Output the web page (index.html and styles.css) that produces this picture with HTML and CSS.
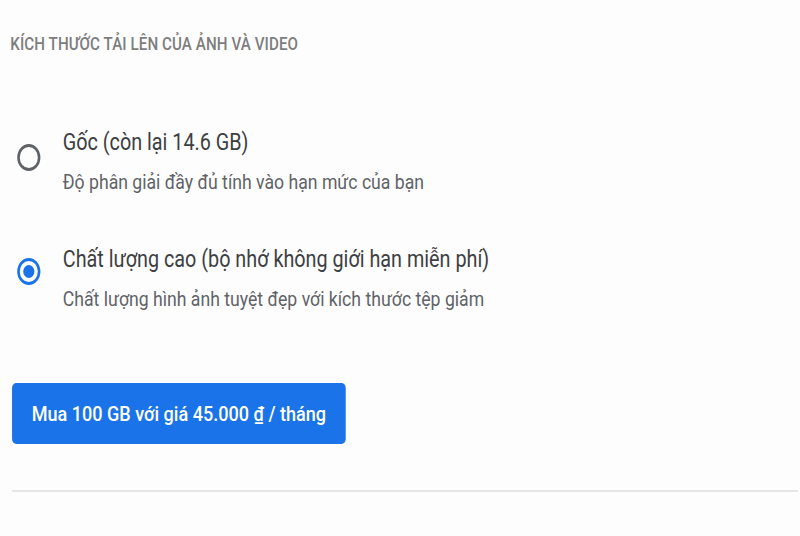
FILE: index.html
```html
<!DOCTYPE html>
<html lang="vi">
<head>
    <meta charset="UTF-8">
    <title>Cài đặt - Kích thước tải lên</title>
    <meta name="viewport" content="width=device-width, initial-scale=1.0">
    <link rel="stylesheet" href="styles.css">
</head>
<body>
    <div class="frame">
        <div class="page">
            <section class="upload-size">
                <h2 class="section-title">Kích thước tải lên của ảnh và video</h2>

                <div class="options">
                    <label class="option">
                        <span class="radio"></span>
                        <span class="option-text">
                            <span class="option-title">Gốc (còn lại 14.6 GB)</span>
                            <span class="option-desc">Độ phân giải đầy đủ tính vào hạn mức của bạn</span>
                        </span>
                    </label>

                    <label class="option">
                        <span class="radio checked"></span>
                        <span class="option-text">
                            <span class="option-title">Chất lượng cao (bộ nhớ không giới hạn miễn phí)</span>
                            <span class="option-desc">Chất lượng hình ảnh tuyệt đẹp với kích thước tệp giảm</span>
                        </span>
                    </label>
                </div>

                <button class="buy-button">Mua 100 GB với giá 45.000 ₫ / tháng</button>
            </section>

            <hr class="divider">
        </div>
    </div>
</body>
</html>
```

FILE: styles.css
```css
* {
    margin: 0;
    padding: 0;
    box-sizing: border-box;
}

body {
    font-family: Roboto, 'Noto Sans', sans-serif;
    background-color: #fdfdfd;
    overflow: hidden;
}

.frame {
    width: 800px;
    height: 536px;
    overflow: hidden;
}

/* the screenshot is horizontally compressed, so the whole page is too */
.page {
    width: 930px;
    transform: scaleX(0.86);
    transform-origin: 0 0;
    padding-top: 34px;
}

.upload-size {
    padding-left: 12px;
}

.section-title {
    font-size: 17.6px;
    line-height: 20px;
    font-weight: 500;
    text-transform: uppercase;
    letter-spacing: 0.1px;
    color: #7d7d7d;
}

.options {
    display: flex;
    flex-direction: column;
    gap: 51px;
    margin-top: 75px;
}

.option {
    display: flex;
    align-items: flex-start;
    gap: 26px;
    padding-left: 8px;
}

.radio {
    flex: none;
    width: 27px;
    height: 27px;
    margin-top: 15px;
    border: 3px solid #5f6368;
    border-radius: 50%;
    display: flex;
    justify-content: center;
    align-items: center;
}

.option + .option .radio {
    margin-top: 12px;
}

.radio.checked {
    border: 3.5px solid #1a73e8;
}

.radio.checked::after {
    content: '';
    width: 13px;
    height: 13px;
    border-radius: 50%;
    background-color: #1a73e8;
}

.option-text {
    display: flex;
    flex-direction: column;
    gap: 12px;
}

.option-title {
    font-size: 23px;
    line-height: 28px;
    color: #3c4043;
}

.option-desc {
    font-size: 20.5px;
    line-height: 26px;
    color: #5f6368;
}

.buy-button {
    display: block;
    margin-top: 71px;
    margin-left: 2px;
    width: 388px;
    height: 61px;
    border: none;
    border-radius: 5px;
    background-color: #1a73e8;
    color: #fff;
    font-family: Roboto, 'Noto Sans', sans-serif;
    font-size: 21px;
    font-weight: 500;
    cursor: pointer;
}

.divider {
    border: none;
    height: 2px;
    background-color: #e6e6e6;
    margin: 46px 2px 0 14px;
}
```
